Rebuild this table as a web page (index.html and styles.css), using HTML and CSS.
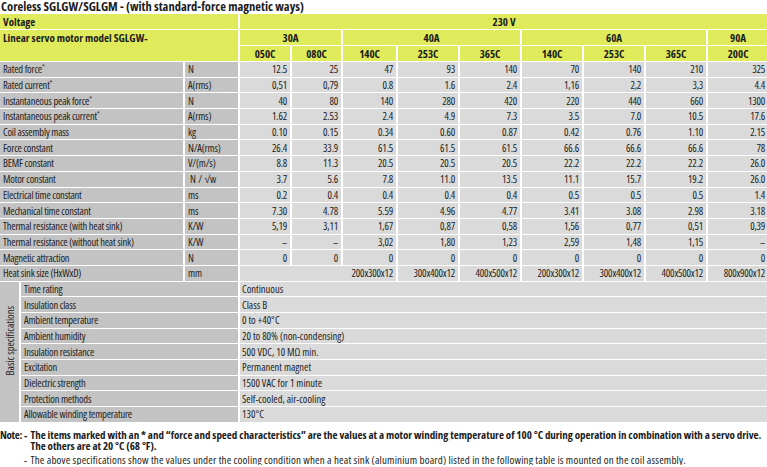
FILE: index.html
```html
<!DOCTYPE html>
<html lang="en">
<head>
<meta charset="utf-8">
<title>Coreless SGLGW/SGLGM</title>
<link rel="stylesheet" href="styles.css">
</head>
<body>
<h1 class="title">Coreless SGLGW/SGLGM - (with standard-force magnetic ways)</h1>
<table class="spec">
  <colgroup>
    <col class="c-side"><col class="c-label"><col class="c-unit">
    <col class="c-v1"><col class="c-v2"><col class="c-v3">
    <col class="c-v"><col class="c-v"><col class="c-v"><col class="c-v"><col class="c-v"><col class="c-v">
  </colgroup>
  <thead>
    <tr class="hdr">
      <th colspan="3" class="hl">Voltage</th>
      <th colspan="9">230 V</th>
    </tr>
    <tr class="hdr">
      <th colspan="3" rowspan="2" class="hl top">Linear servo motor model SGLGW-</th>
      <th colspan="2">30A</th><th colspan="3">40A</th><th colspan="3">60A</th><th>90A</th>
    </tr>
    <tr class="hdr">
      <th>050C</th><th>080C</th><th>140C</th><th>253C</th><th>365C</th><th>140C</th><th>253C</th><th>365C</th><th>200C</th>
    </tr>
  </thead>
  <tbody>
    <tr><td colspan="2" class="lbl">Rated force<sup>*</sup></td><td class="unit">N</td><td>12.5</td><td>25</td><td>47</td><td>93</td><td>140</td><td>70</td><td>140</td><td>210</td><td>325</td></tr>
    <tr><td colspan="2" class="lbl">Rated current<sup>*</sup></td><td class="unit">A(rms)</td><td>0,51</td><td>0,79</td><td>0.8</td><td>1.6</td><td>2.4</td><td>1,16</td><td>2,2</td><td>3,3</td><td>4.4</td></tr>
    <tr><td colspan="2" class="lbl">Instantaneous peak force<sup>*</sup></td><td class="unit">N</td><td>40</td><td>80</td><td>140</td><td>280</td><td>420</td><td>220</td><td>440</td><td>660</td><td>1300</td></tr>
    <tr><td colspan="2" class="lbl">Instantaneous peak current<sup>*</sup></td><td class="unit">A(rms)</td><td>1.62</td><td>2.53</td><td>2.4</td><td>4.9</td><td>7.3</td><td>3.5</td><td>7.0</td><td>10.5</td><td>17.6</td></tr>
    <tr><td colspan="2" class="lbl">Coil assembly mass</td><td class="unit">kg</td><td>0.10</td><td>0.15</td><td>0.34</td><td>0.60</td><td>0.87</td><td>0.42</td><td>0.76</td><td>1.10</td><td>2.15</td></tr>
    <tr><td colspan="2" class="lbl">Force constant</td><td class="unit">N/A(rms)</td><td>26.4</td><td>33.9</td><td>61.5</td><td>61.5</td><td>61.5</td><td>66.6</td><td>66.6</td><td>66.6</td><td>78</td></tr>
    <tr><td colspan="2" class="lbl">BEMF constant</td><td class="unit">V/(m/s)</td><td>8.8</td><td>11.3</td><td>20.5</td><td>20.5</td><td>20.5</td><td>22.2</td><td>22.2</td><td>22.2</td><td>26.0</td></tr>
    <tr><td colspan="2" class="lbl">Motor constant</td><td class="unit"><span class="mc">N / √w</span></td><td>3.7</td><td>5.6</td><td>7.8</td><td>11.0</td><td>13.5</td><td>11.1</td><td>15.7</td><td>19.2</td><td>26.0</td></tr>
    <tr><td colspan="2" class="lbl">Electrical time constant</td><td class="unit">ms</td><td>0.2</td><td>0.4</td><td>0.4</td><td>0.4</td><td>0.4</td><td>0.5</td><td>0.5</td><td>0.5</td><td>1.4</td></tr>
    <tr><td colspan="2" class="lbl">Mechanical time constant</td><td class="unit">ms</td><td>7.30</td><td>4.78</td><td>5.59</td><td>4.96</td><td>4.77</td><td>3.41</td><td>3.08</td><td>2.98</td><td>3.18</td></tr>
    <tr><td colspan="2" class="lbl">Thermal resistance (with heat sink)</td><td class="unit">K/W</td><td>5,19</td><td>3,11</td><td>1,67</td><td>0,87</td><td>0,58</td><td>1,56</td><td>0,77</td><td>0,51</td><td>0,39</td></tr>
    <tr><td colspan="2" class="lbl">Thermal resistance (without heat sink)</td><td class="unit">K/W</td><td>–</td><td>–</td><td>3,02</td><td>1,80</td><td>1,23</td><td>2,59</td><td>1,48</td><td>1,15</td><td>–</td></tr>
    <tr><td colspan="2" class="lbl">Magnetic attraction</td><td class="unit">N</td><td>0</td><td>0</td><td>0</td><td>0</td><td>0</td><td>0</td><td>0</td><td>0</td><td>0</td></tr>
    <tr><td colspan="2" class="lbl">Heat sink size (HxWxD)</td><td class="unit">mm</td><td colspan="3">200x300x12</td><td>300x400x12</td><td>400x500x12</td><td>200x300x12</td><td>300x400x12</td><td>400x500x12</td><td>800x900x12</td></tr>
    <tr class="bs"><td rowspan="9" class="side"><span>Basic specifications</span></td><td colspan="2" class="sname">Time rating</td><td colspan="9" class="sval">Continuous</td></tr>
    <tr class="bs"><td colspan="2" class="sname">Insulation class</td><td colspan="9" class="sval">Class B</td></tr>
    <tr class="bs"><td colspan="2" class="sname">Ambient temperature</td><td colspan="9" class="sval">0 to +40°C</td></tr>
    <tr class="bs"><td colspan="2" class="sname">Ambient humidity</td><td colspan="9" class="sval">20 to 80% (non-condensing)</td></tr>
    <tr class="bs"><td colspan="2" class="sname">Insulation resistance</td><td colspan="9" class="sval">500 VDC, 10 MΩ min.</td></tr>
    <tr class="bs"><td colspan="2" class="sname">Excitation</td><td colspan="9" class="sval">Permanent magnet</td></tr>
    <tr class="bs"><td colspan="2" class="sname">Dielectric strength</td><td colspan="9" class="sval">1500 VAC for 1 minute</td></tr>
    <tr class="bs"><td colspan="2" class="sname">Protection methods</td><td colspan="9" class="sval">Self-cooled, air-cooling</td></tr>
    <tr class="bs"><td colspan="2" class="sname">Allowable winding temperature</td><td colspan="9" class="sval">130°C</td></tr>
  </tbody>
</table>
<div class="notes">
  <div class="note-head">Note:</div>
  <div class="note-dash strong">-</div>
  <div class="note-text strong">The items marked with an * and “force and speed characteristics” are the values at a motor winding temperature of 100 °C during operation in combination with a servo drive.<br>The others are at 20 °C (68 °F).</div>
  <div class="note-dash small">-</div>
  <div class="note-text small">The above specifications show the values under the cooling condition when a heat sink (aluminium board) listed in the following table is mounted on the coil assembly.</div>
</div>
</body>
</html>
```
FILE: styles.css
```css
html, body {
  margin: 0;
  padding: 0;
  background: #ffffff;
}
body {
  font-family: "Open Sans", "Noto Sans", "Liberation Sans", sans-serif;
  font-stretch: 75%;
  color: #1c1c1c;
  font-size: 11px;
}
.title {
  margin: 0;
  padding: 0 0 0 1px;
  font-size: 12.5px;
  line-height: 14px;
  font-weight: bold;
}
.spec {
  width: 768px;
  table-layout: fixed;
  border-collapse: separate;
  border-spacing: 0;
}
.c-side { width: 21px; }
.c-label { width: 164px; }
.c-unit { width: 55px; }
.c-v1 { width: 52px; }
.c-v2 { width: 51px; }
.c-v3 { width: 55px; }
.c-v { width: 62px; }

.spec th, .spec td {
  padding: 0 3px;
  border-right: 2px solid #fff;
  border-bottom: 1px solid #fff;
  white-space: nowrap;
  overflow: hidden;
}
.spec th {
  height: 15px;
  background: #dfeb5a;
  font-weight: bold;
  text-align: center;
  line-height: 15px;
}
.spec th.hl { text-align: left; }
.spec th.top { vertical-align: top; }
.spec td {
  height: 14.7px;
  line-height: 14px;
  font-size: 10.5px;
  letter-spacing: -0.2px;
  background: #dadada;
  text-align: right;
  color: #222;
}
.spec td.lbl, .spec td.unit, .spec td.sname {
  background: #c3c3c3;
  text-align: left;
}
.spec td.sval {
  text-align: left;
  padding-left: 2px;
  letter-spacing: 0;
}
.spec td.side {
  background: #c3c3c3;
  padding: 0;
  text-align: center;
  vertical-align: middle;
  letter-spacing: 0;
}
.side span {
  display: inline-block;
  writing-mode: vertical-rl;
  transform: rotate(180deg);
  margin-bottom: 20px;
  line-height: 20px;
}
.spec sup {
  font-size: 7px;
  line-height: 0;
  vertical-align: 4px;
}
.mc { padding-left: 2px; letter-spacing: 0.2px; }

.notes {
  display: grid;
  grid-template-columns: auto auto 1fr;
  margin-top: 6px;
  font-size: 11px;
  line-height: 11.5px;
}
.note-head {
  grid-column: 1;
  font-weight: bold;
  letter-spacing: -0.3px;
  padding-right: 2px;
}
.note-dash {
  grid-column: 2;
  padding-right: 3px;
}
.note-text {
  grid-column: 3;
}
.note-text.strong {
  white-space: nowrap;
  letter-spacing: -0.03px;
}
.strong { font-weight: bold; }
.note-dash.small, .note-text.small {
  margin-top: 2px;
  font-size: 11px;
  letter-spacing: 0.15px;
}
```
